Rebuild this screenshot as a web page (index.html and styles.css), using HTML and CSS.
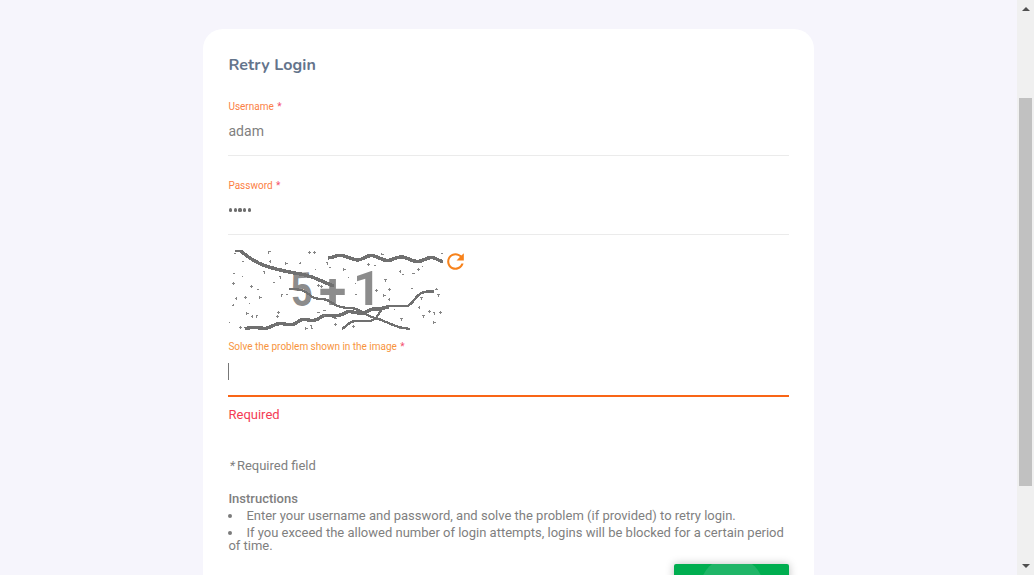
FILE: index.html
```html
<!DOCTYPE html>
<html lang="en">
<head>
<meta charset="utf-8">
<title>Retry Login</title>
<link rel="stylesheet" href="styles.css">
</head>
<body>
<div class="page">
  <main class="content">
    <form class="card">
      <h1 class="title">Retry Login</h1>
      <div class="field">
        <label class="label">Username <span class="star">*</span></label>
        <div class="value">adam</div>
      </div>
      <div class="field">
        <label class="label">Password <span class="star">*</span></label>
        <div class="value password"><i></i><i></i><i></i><i></i><i></i></div>
      </div>
      <div class="captcha">
        <svg class="puzzle" viewBox="228 250 215 80" shape-rendering="crispEdges">
          <g class="digits">
            <text transform="translate(294 306) rotate(-4) scale(.84 1)" x="-3" y="0">5</text>
            <text class="plus" x="319" y="309">+</text>
            <text x="353" y="305" class="one">1</text>
          </g>
          <g class="strokes">
            <path d="M235 250.500H240C247 256 255 263 266 266C280 271 291 272 305 275C318 278 322 282 334 286"/>
            <path d="M328 258C337 257 336 254 344 256S353 260 358 260S366 255 372 255.500S382 261 388 260.500S397 256 403 257S412 262 418 261.500S427 257 432 257.500S438 261 443 261.500"/>
            <path d="M245 329C252 326 258 328 265 328.500C273 327 275 323 281 323.500S289 326 294 324S299 319 305 319.500S313 322 318 319S323 315 329 315.500S338 317 343 314S348 311 358 313S367 308 375 309S382 307 389 307"/>
          </g>
          <g class="strokes thin">
            <path d="M289 289C300 289 305 290 311 296C317 301 323 297 329 301S339 308 350 308S362 315 375 318S391 327 410 329"/>
            <path d="M342 329C349 324 350 321 357 321H370C377 320 378 314 382 309C387 304 392 307 407 306C414 304 415 295 422 293C426 290 429 292 434 291.500"/>
          </g>
          <path class="dots" d="M234 253.500h2M268 251.500h3m-2.500-1v3M308 252.500h3m-1.500-1.500v3M313 252.500h3m-1.500-1.500v3M269 261.500h2m-.5-1.500v3M242 261.500h2M285 263.500h3m-2.500-1.500v3M299 263.500h2m-.5-1.500v2M233 273.500h2M263 271.500h2m-.5 0v2M242 276.500h1M279 276.500h2m-.5 0v2M232 283.500h3m-1.500-1.500v3M250 286.500h3m-1.500-1.500v3M273 282.500h2M257 289.500h2M281 294.500h2m-1.500 0v2M286 294.500h2M235 298.500h2m-.5-1.500v3M244 297.500h3m-1.500-1.500v3M259 297.500h3m-2.500-1.500v3M232 305.500h2m-.5-1.500v2M249 303.500h1M277 312.500h3m-1.500-1.500v3M246 313.500h3m-2.500-1.500v3M251 316.500h2m-.5-1.500v3M256 315.500h2m-1.500 0v2M276 316.500h3m-1.500-1.500v3M229 322.500h1M239 327.500h3m-1.500-1.500v3M305 328.500h3m-2.500-1.500v3M310 325.500h2m-.5 0v3M311 328.500h2M309 301.500h1M317 312.500h3M323 315.500h2M317 285.500h3m-1.500-1.500v3M320 286.500h3m-1.500-1.500v3M326 262.500h2m-.5 0v2M329 267.500h2M343 269.500h3m-2.500-1.500v3M315 269.500h1M348 277.500h1M323 310.500h3M334 318.500h3M334 324.500h3m-1.500-1.500v3M381 254.500h3m-2.500-1.500v2M367 264.500h3m-1.500-1.500v3M374 265.500h2M399 271.500h2m-.5-1.500v3M417 269.500h3m-1.500-1.500v3M412 273.500h3M355 283.500h1M384 279.500h3m-1.500 0v2M402 274.500h2M388 289.500h3m-1.500-1.500v3M375 290.500h3m-1.500-1.500v3M383 295.500h3m-2.500-1.500v3M388 299.500h2m-.5-1.500v3M355 294.500h2M420 297.500h3m-1.500 0v2M435 289.500h3m-1.500-1.500v2M437 294.500h3m-1.500 0v2M418 307.500h2m-.5-1.500v3M428 311.500h3m-1.500-1.500v3M433 312.500h2m-.5 0v2M439 312.500h3m-1.500-1.500v3M422 315.500h3m-1.500 0v2M400 318.500h3m-1.500 0v2M433 322.500h3m-2.500-1.500v3M399 328.500h2M352 326.500h3m-1.500-1.500v3M441 253.500h2M422 266.500h1M411 288.500h2M394 309.500h1"/>
        </svg>
        <svg class="refresh" viewBox="0 0 24 24"><path d="M17.650 6.350C16.200 4.900 14.210 4 12 4c-4.420 0-7.990 3.580-7.990 8s3.570 8 7.990 8c3.730 0 6.840-2.550 7.730-6h-2.080c-.82 2.330-3.040 4-5.650 4-3.310 0-6-2.690-6-6s2.690-6 6-6c1.660 0 3.140.69 4.220 1.780L13 11h7V4l-2.350 2.350z"/></svg>
      </div>
      <div class="field answer">
        <label class="label">Solve the problem shown in the image <span class="star">*</span></label>
        <div class="value"><span class="caret"></span></div>
      </div>
      <p class="error">Required</p>
      <p class="note"><em>*</em>Required field</p>
      <section class="instructions">
        <h2>Instructions</h2>
        <p><span class="bullet"></span>Enter your username and password, and solve the problem (if provided) to retry login.</p>
        <p><span class="bullet"></span>If you exceed the allowed number of login attempts, logins will be blocked for a certain period<br>of time.</p>
      </section>
      <div class="actions"><div class="submit"><span class="ripple"></span></div></div>
    </form>
  </main>
  <aside class="scrollbar">
    <svg class="arrow" viewBox="0 0 8 4"><path d="M0 4L4 0L8 4Z"/></svg>
    <div class="track"><div class="thumb"></div></div>
    <svg class="arrow" viewBox="0 0 8 4"><path d="M0 0L4 4L8 0Z"/></svg>
  </aside>
</div>
</body>
</html>
```

FILE: styles.css
```css
* { box-sizing: border-box; }
body { margin: 0; overflow: hidden; background: #f6f5fc; font-family: Roboto, sans-serif; color: #7f7f7f; }
.page { display: flex; height: 575px; overflow: hidden; }
.content { flex: 1; padding: 29px 0 0 203px; }
.card { width: 611px; height: 640px; padding: 26px 25px; background: #fff; border-radius: 20px; }
.title { margin: 0; height: 46px; padding-left: .5px; font: 700 16px/20px Nunito, Lato, sans-serif; letter-spacing: .1px; color: #64748b; }
.field { height: 55px; border-bottom: 1px solid #ebebeb; margin-bottom: 24px; }
.label { display: block; padding-left: .4px; font-size: 10px; line-height: 12px; color: #fb8045; }
.star { color: #f4516c; margin-left: 1px; }
.value { height: 20px; margin-top: 8px; padding-left: .5px; font-size: 14px; line-height: 20px; }
.password { display: flex; align-items: center; gap: 1.5px; padding: 0 0 0 1px; }
.password i { width: 3.200px; height: 3.200px; border-radius: 50%; background: #6e6e6e; }
.captcha { display: flex; height: 80px; margin-top: -9px; }
.puzzle { width: 215px; height: 80px; }
.digits { fill: #8c8c8c; font-family: Roboto, sans-serif; font-weight: 700; font-size: 46px; }
.digits .one { font-size: 49px; }
.digits .plus { font-size: 50px; }
.strokes { fill: none; stroke: #707070; stroke-width: 3.5; }
.thin { stroke-width: 2.3; }
.dots { stroke: #858585; stroke-width: 1; fill: none; }
.refresh { width: 25px; height: 25px; margin-top: -1px; fill: #f7821b; }
.answer { height: 56px; margin: 11px 0 0; border-bottom: 2px solid #f96516; }
.answer .label { color: #f7943d; letter-spacing: -.01px; }
.answer .value { margin-top: 10px; padding-left: 0; }
.caret { display: block; width: 1px; height: 17px; background: #777; }
.error { margin: 10px 0 0; padding-left: .5px; font-size: 13px; line-height: 16px; color: #f43b55; }
.note { margin: 35px 0 0; padding-left: .4px; font-size: 13px; line-height: 16px; }
.note em { display: inline-block; width: 8.500px; padding-left: 1px; }
.instructions { margin-top: 18px; padding-left: .4px; font-size: 13px; line-height: 13px; }
.instructions h2 { margin: 0 0 4px; font-size: 13px; line-height: 13px; font-weight: 500; }
.instructions p { margin: 0 0 4px; white-space: nowrap; }
.bullet { display: inline-block; width: 4px; height: 4px; margin-right: 14px; vertical-align: 2px; border-radius: 50%; background: #7b7b7b; }
.actions { display: flex; justify-content: flex-end; margin-top: 12px; }
.submit { width: 115px; height: 36px; overflow: hidden; border-radius: 2px; background: #00ae50; box-shadow: 0 0 9px rgba(0, 0, 0, .25); }
.ripple { display: block; width: 64px; height: 64px; margin: -7px auto 0; border-radius: 50%; background: #1fb567; }
.scrollbar { display: flex; flex-direction: column; align-items: center; width: 17px; padding: 7px 0; background: #f0f0f0; }
.arrow { width: 8px; height: 4px; fill: #505050; }
.track { flex: 1; width: 13px; padding-top: 87px; }
.thumb { height: 388px; background: #c1c1c1; }
```
